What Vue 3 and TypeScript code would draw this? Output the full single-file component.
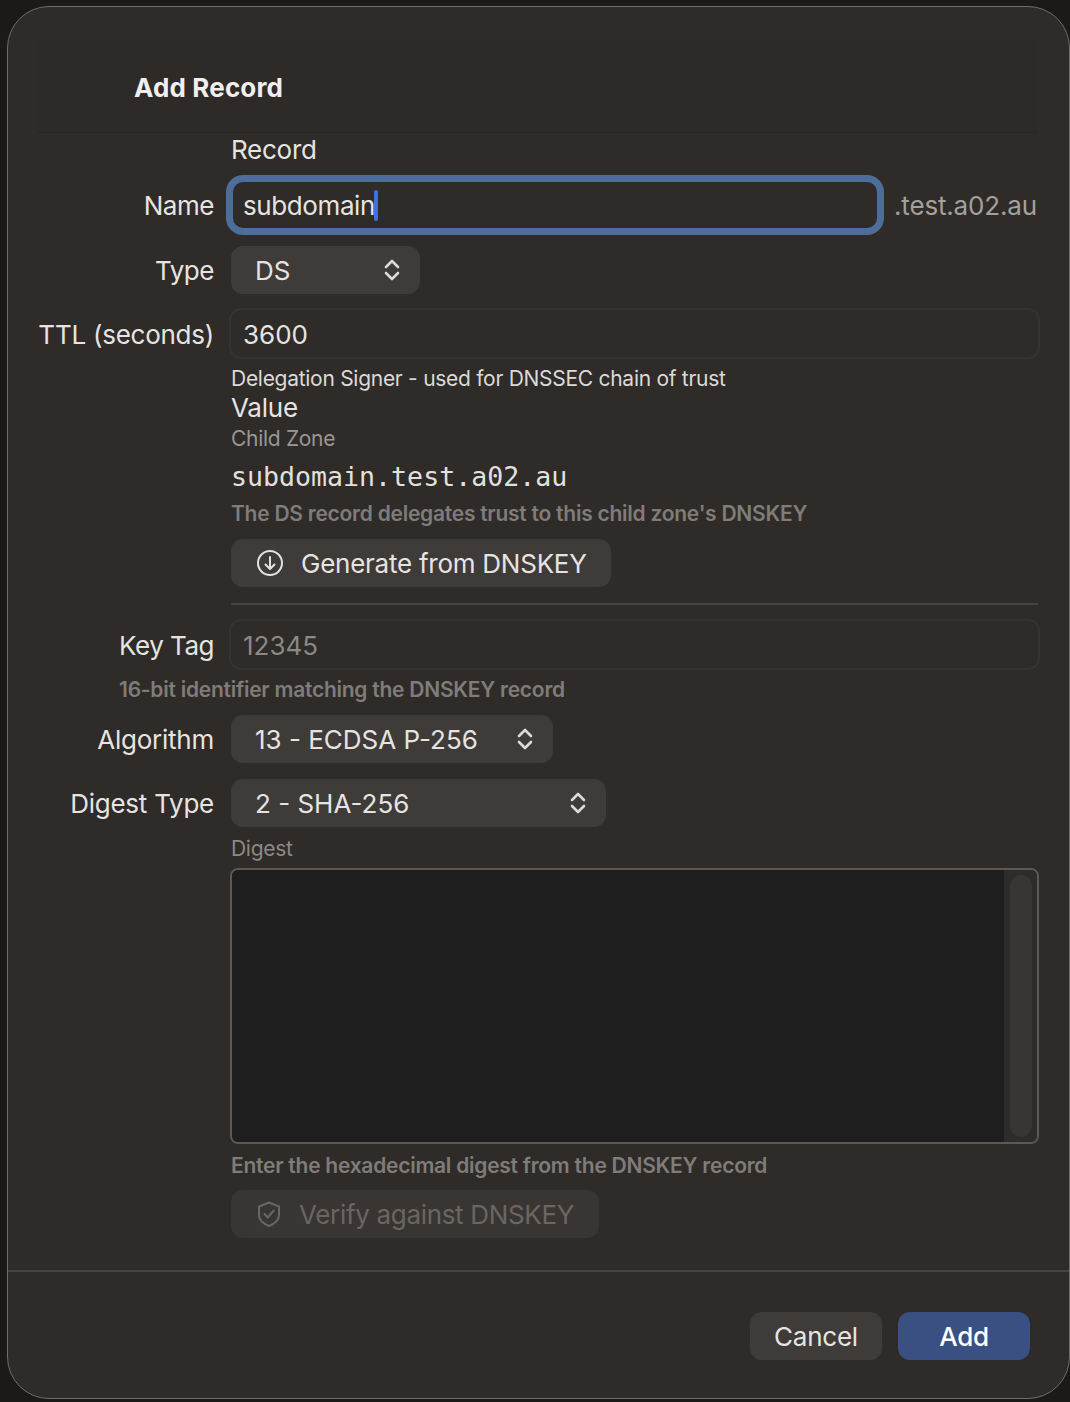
<script setup lang="ts">
const algorithm = '13 - ECDSA P-256'
const digestType = '2 - SHA-256'
</script>

<template>
  <div class="dialog">
    <header class="head"><h1>Add Record</h1></header>
    <main class="form">
      <div class="section record">Record</div>

      <div class="row name-row">
        <label>Name</label>
        <div class="control inline">
          <div class="focus-input">subdomain<span class="caret"></span></div>
          <span class="suffix">.test.a02.au</span>
        </div>
      </div>

      <div class="row type-row">
        <label>Type</label>
        <div class="control">
          <div class="select w-type">
            <span>DS</span>
            <svg width="16" height="22" viewBox="0 0 16 22" fill="none" stroke="#dcdad8" stroke-width="2.6" stroke-linecap="round" stroke-linejoin="round"><path d="M2 8 8 2l6 6M2 14l6 6 6-6"/></svg>
          </div>
        </div>
      </div>

      <div class="row ttl-row">
        <label>TTL (seconds)</label>
        <div class="control"><div class="input">3600</div></div>
      </div>

      <div class="indent help-light">Delegation Signer - used for DNSSEC chain of trust</div>
      <div class="indent section value">Value</div>
      <div class="indent child-label">Child Zone</div>
      <div class="indent mono">subdomain.test.a02.au</div>
      <div class="indent help zone-help">The DS record delegates trust to this child zone's DNSKEY</div>

      <div class="indent">
        <button class="btn generate" type="button">
          <svg width="28" height="28" viewBox="0 0 28 28" fill="none" stroke="#e4e2e0" stroke-width="2" stroke-linecap="round" stroke-linejoin="round"><circle cx="14" cy="14" r="12"/><path d="M14 8v12M9.500 15.500 14 20l4.500-4.500"/></svg>
          <span>Generate from DNSKEY</span>
        </button>
      </div>

      <div class="indent rule"></div>

      <div class="row keytag-row">
        <label>Key Tag</label>
        <div class="control"><div class="input placeholder">12345</div></div>
      </div>
      <div class="help keytag-help">16-bit identifier matching the DNSKEY record</div>

      <div class="row algo-row">
        <label>Algorithm</label>
        <div class="control">
          <div class="select w-algo">
            <span>{{ algorithm }}</span>
            <svg width="16" height="22" viewBox="0 0 16 22" fill="none" stroke="#dcdad8" stroke-width="2.6" stroke-linecap="round" stroke-linejoin="round"><path d="M2 8 8 2l6 6M2 14l6 6 6-6"/></svg>
          </div>
        </div>
      </div>

      <div class="row digest-row">
        <label>Digest Type</label>
        <div class="control">
          <div class="select w-digest">
            <span>{{ digestType }}</span>
            <svg width="16" height="22" viewBox="0 0 16 22" fill="none" stroke="#dcdad8" stroke-width="2.6" stroke-linecap="round" stroke-linejoin="round"><path d="M2 8 8 2l6 6M2 14l6 6 6-6"/></svg>
          </div>
        </div>
      </div>

      <div class="indent child-label digest-label">Digest</div>
      <div class="indent textarea-wrap">
        <div class="textarea">
          <div class="pane"></div>
          <div class="track"><div class="thumb"></div></div>
        </div>
      </div>
      <div class="indent help digest-help">Enter the hexadecimal digest from the DNSKEY record</div>

      <div class="indent">
        <button class="btn verify" type="button" disabled>
          <svg width="24" height="28" viewBox="0 0 24 28" fill="none" stroke="#6a6663" stroke-width="2" stroke-linecap="round" stroke-linejoin="round"><path d="M12 2.500 22 6.500V15c0 5-4 8.500-10 11C6 23.500 2 20 2 15V6.500Z"/><path d="M7.500 14l3.200 3.500 6-7"/></svg>
          <span>Verify against DNSKEY</span>
        </button>
      </div>
    </main>
    <footer class="foot">
      <button class="btn action" type="button">Cancel</button>
      <button class="btn action primary" type="button">Add</button>
    </footer>
  </div>
</template>

<style>
html, body { margin: 0; background: #1c1a19; }
</style>

<style scoped>
.dialog {
  box-sizing: border-box;
  width: 1063px;
  height: 1393px;
  margin: 6px 0 0 7px;
  background: #2f2b28;
  border: 1px solid #6f6c69;
  border-radius: 42px;
  display: flex;
  flex-direction: column;
  font-family: Inter, "Noto Sans", sans-serif;
  font-size: 26px;
  letter-spacing: -0.25px;
  color: #e6e4e2;
  overflow: hidden;
}
.head {
  box-sizing: border-box;
  height: 93px;
  margin: 33px 31px 0 29px;
  padding: 33px 0 0 97px;
  background: #2e2a27;
  border-bottom: 1px solid #2a2623;
}
.head h1 { margin: 0; font-size: 26px; line-height: 30px; font-weight: 700; letter-spacing: 0.15px; color: #f0efee; }
.form { padding: 0 31px 0 29px; flex: 1; }
.section { line-height: 34px; height: 34px; }
.record { margin-left: 194px; }
.indent { margin-left: 194px; }
.row { display: flex; align-items: center; }
.row label { width: 177px; flex: none; text-align: right; white-space: nowrap; }
.control { margin-left: 17px; flex: 1; min-width: 0; }
.inline { display: flex; align-items: center; }
.name-row { margin-top: 8px; }
.name-row label, .type-row label { letter-spacing: -0.45px; }
.focus-input {
  box-sizing: border-box;
  flex: none;
  width: 658px;
  height: 60px;
  margin-left: -5px;
  padding-left: 10px;
  line-height: 47px;
  letter-spacing: -0.4px;
  border: 7px solid #4d6e9b;
  border-radius: 17px;
  white-space: nowrap;
}
.caret {
  display: inline-block;
  width: 4px;
  height: 31px;
  margin-left: -1px;
  border-radius: 2px;
  background: #3f70e4;
  vertical-align: -6px;
}
.suffix { margin-left: 10px; color: #a3a09e; white-space: nowrap; letter-spacing: -0.17px; }
.type-row { margin-top: 11px; }
.select {
  box-sizing: border-box;
  height: 48px;
  padding: 0 20px 0 24px;
  background: #3f3b38;
  border-radius: 12px;
  display: flex;
  align-items: center;
  justify-content: space-between;
  letter-spacing: 0;
}
.w-type { width: 189px; }
.w-algo { width: 322px; }
.w-digest { width: 375px; }
.ttl-row { margin-top: 14px; }
.ttl-row label, .keytag-row label { margin-top: 2px; }
.keytag-row label { letter-spacing: -0.5px; }
.input {
  box-sizing: border-box;
  height: 51px;
  margin: 0 -2px 0 -2px;
  padding-left: 12px;
  line-height: 49px;
  letter-spacing: 0;
  border: 2px solid #373330;
  border-radius: 12px;
}
.placeholder { color: #8b8885; }
.help-light { margin: 7px 0 -1px 194px; font-size: 21px; line-height: 26px; letter-spacing: -0.28px; color: #dcdad8; }
.child-label { font-size: 21px; line-height: 28px; letter-spacing: -0.3px; color: #9a9794; }
.mono {
  margin-top: 7px;
  font-family: "DejaVu Sans Mono", monospace;
  font-size: 26.6px;
  line-height: 34px;
  letter-spacing: 0;
  color: #e2e0de;
}
.help { font-size: 21px; line-height: 26px; font-weight: 600; letter-spacing: -0.25px; color: #7f7c79; white-space: nowrap; }
.zone-help { margin-top: 7px; margin-bottom: -1px; }
.btn {
  box-sizing: border-box;
  height: 48px;
  border: 0;
  border-radius: 12px;
  background: #3f3b38;
  color: #e6e4e2;
  font: inherit;
  letter-spacing: inherit;
  padding: 0;
  display: flex;
  align-items: center;
}
.generate { width: 380px; margin-top: 13px; padding-left: 25px; gap: 17px; }
.rule { height: 2px; margin-top: 16px; background: #474340; }
.keytag-row { margin-top: 14px; }
.keytag-help { margin: 7px 0 0 82px; }
.algo-row { margin-top: 12px; }
.digest-row { margin-top: 16px; }
.digest-label { margin-top: 9px; margin-bottom: -1px; line-height: 26px; color: #8c8986; }
.textarea-wrap { margin-top: 7px; }
.textarea {
  box-sizing: border-box;
  height: 276px;
  margin: 0 -1px 0 -1px;
  border: 2px solid #5b5855;
  border-radius: 8px;
  display: flex;
  overflow: hidden;
}
.pane { flex: 1; background: #1e1e1e; }
.track { width: 33px; padding: 5px 6px; box-sizing: border-box; background: #2f2b28; }
.thumb { width: 22px; height: 100%; border-radius: 11px; background: #393532; }
.digest-help { margin-top: 9px; margin-bottom: -1px; }
.verify { width: 368px; margin-top: 12px; padding-left: 26px; gap: 18px; background: #393532; color: #6a6663; letter-spacing: -0.33px; }
.foot {
  box-sizing: border-box;
  height: 128px;
  border-top: 2px solid #474340;
  padding: 40px 39px 0 0;
  display: flex;
  justify-content: flex-end;
  gap: 16px;
}
.action { width: 132px; justify-content: center; }
.primary { background: #3a5082; color: #fff; font-weight: 500; }
</style>
